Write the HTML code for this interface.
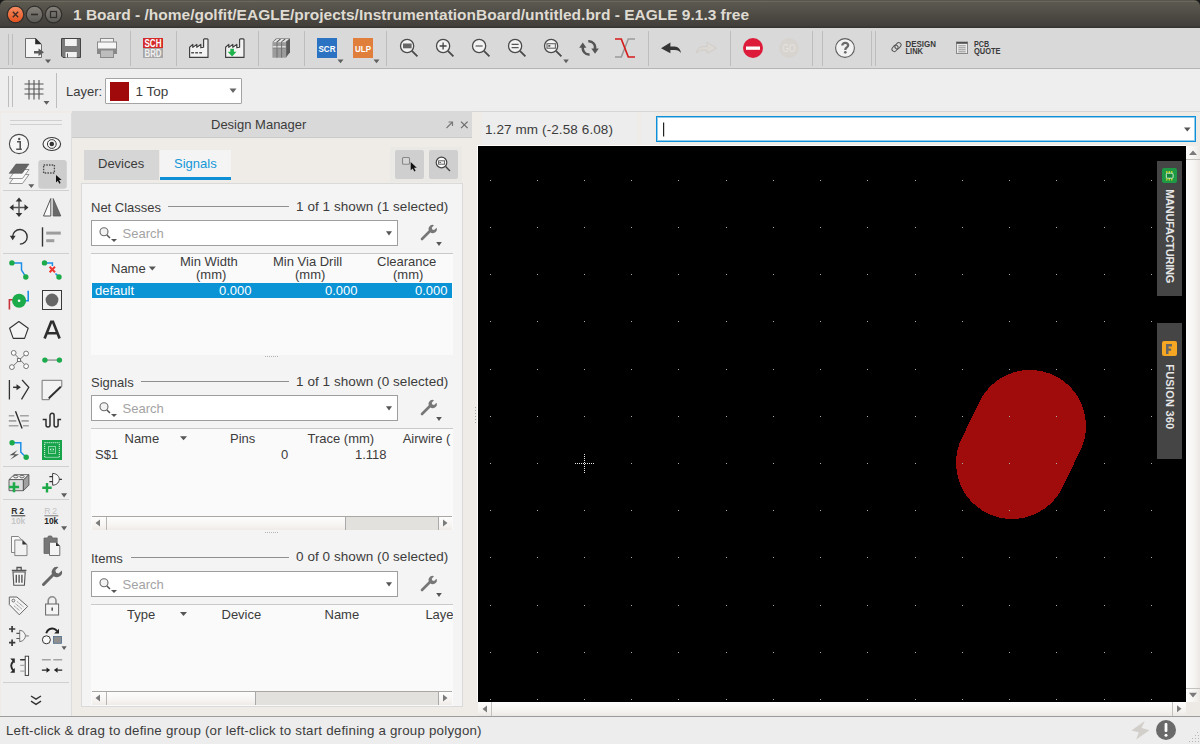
<!DOCTYPE html>
<html><head><meta charset="utf-8">
<style>
*{margin:0;padding:0;box-sizing:border-box}
html,body{width:1200px;height:744px;overflow:hidden;background:#efebe7;font-family:"Liberation Sans",sans-serif;color:#3c3c3c}
.a{position:absolute}
.t{position:absolute;white-space:nowrap;line-height:1;font-size:13px}
svg{position:absolute;overflow:visible}
.sb{width:307px;height:26px;background:#fff;border:1px solid #9e9e9e}
.ph{color:#a3a3a3}
.hs{height:14px;background:linear-gradient(#fdfdfd,#f7f5f3 60%,#efebe7);border-top:1px solid #aaa7a3}
.hh{height:13px;background:#e3e1dd;border-left:1px solid #a9a9a9;border-right:1px solid #a9a9a9}
</style></head><body>

<!-- TITLE BAR -->
<div class="a" style="left:0;top:0;width:1200px;height:8px;background:#1a1a1a"></div>
<div class="a" style="left:0;top:0;width:1200px;height:28px;background:linear-gradient(#57554e 0,#5c5950 2px,#4f4c46 14px,#423f3a 26px,#363531 27px);border-radius:6px 6px 0 0"></div>
<div class="a" style="left:3px;top:1px;width:1194px;height:1px;background:#6b685c"></div>
<div id="title" class="t" style="left:73px;top:7px;font-size:15.5px;font-weight:bold;color:#dfdbd2">1 Board - /home/golfit/EAGLE/projects/InstrumentationBoard/untitled.brd - EAGLE 9.1.3 free</div>

<!-- TOOLBAR 1 -->
<div class="a" style="left:0;top:28px;width:1200px;height:40px;background:#d9d9d9"></div>
<div class="a" style="left:0;top:68px;width:1200px;height:1px;background:#b4b4b4"></div>
<!-- TOOLBAR 2 -->
<div class="a" style="left:0;top:69px;width:1200px;height:42px;background:#eeeeee"></div>


<!-- TOOLBAR ICONS OVERLAY -->
<svg class="a" style="left:0;top:0" width="1200" height="112" viewBox="0 0 1200 112">
<defs>
<linearGradient id="gclose" x1="0" y1="0" x2="0" y2="1"><stop offset="0" stop-color="#f78e64"/><stop offset="1" stop-color="#e3501c"/></linearGradient>
<linearGradient id="gmin" x1="0" y1="0" x2="0" y2="1"><stop offset="0" stop-color="#85827c"/><stop offset="1" stop-color="#5c5a55"/></linearGradient>
</defs>
<!-- window buttons -->
<circle cx="15.5" cy="14.5" r="8.3" fill="url(#gclose)" stroke="#2f2e2b" stroke-width="1.2"/>
<path d="M12.8 11.8l5.4 5.4M18.2 11.8l-5.4 5.4" stroke="#3a2a22" stroke-width="1.3"/>
<circle cx="34.5" cy="14.5" r="8.3" fill="url(#gmin)" stroke="#2f2e2b" stroke-width="1.2"/>
<path d="M31 14.5h7" stroke="#2f2e2b" stroke-width="1.6"/>
<circle cx="53.5" cy="14.5" r="8.3" fill="url(#gmin)" stroke="#2f2e2b" stroke-width="1.2"/>
<rect x="50.5" y="11.5" width="6" height="6" fill="none" stroke="#2f2e2b" stroke-width="1.2"/>

<!-- toolbar handles & separators -->
<g fill="#bdbdbd" shape-rendering="crispEdges">
<rect x="8" y="34" width="1" height="31"/><rect x="12" y="34" width="1" height="31"/>
<rect x="130" y="31" width="1" height="35"/><rect x="176" y="31" width="1" height="35"/>
<rect x="258" y="31" width="1" height="35"/><rect x="304" y="31" width="1" height="35"/>
<rect x="386" y="31" width="1" height="35"/><rect x="648" y="31" width="1" height="35"/>
<rect x="730" y="31" width="1" height="35"/><rect x="812" y="31" width="1" height="35"/>
<rect x="822" y="31" width="1" height="35"/><rect x="871" y="31" width="1" height="35"/>
<rect x="875" y="31" width="1" height="35"/>
<rect x="8" y="76" width="1" height="31"/><rect x="12" y="76" width="1" height="31"/>
<rect x="56" y="73" width="1" height="35"/>
</g>

<!-- new/file -->
<path d="M25.5 38.5h10l6 6v13h-16z" fill="#f4f4f4" stroke="#6e6e6e"/>
<path d="M35.2 38.2h0.6l5.7 5.7v0.4h-6.3z" fill="#2a2a2a"/>
<path d="M34 51h4.5v-2.5l5.5 3.8-5.5 3.8v-2.6h-4.5z" fill="#5b5b5b"/>
<path d="M45 59.5h6l-3 3.8z" fill="#5f5f5f"/>
<!-- save -->
<path d="M61.5 38.5h19v19h-17.5l-1.5-1.5z" fill="#7b7b7b" stroke="#444"/>
<rect x="65" y="39" width="11.8" height="7" fill="#f2f2f2"/>
<rect x="65.5" y="52" width="11.3" height="5.5" fill="#f2f2f2"/>
<rect x="67" y="53.5" width="1" height="4" fill="#555"/>
<!-- print -->
<rect x="100.5" y="38.5" width="13" height="7.5" fill="#f2f2f2" stroke="#8a8a8a"/>
<rect x="97.5" y="42" width="19" height="11.5" fill="#f6f6f6" stroke="#8a8a8a"/>
<rect x="97.5" y="48.5" width="19" height="5" fill="#888"/>
<rect x="100.5" y="50" width="13" height="7.5" fill="#bdbdbd" stroke="#8a8a8a"/>

<!-- SCH/BRD -->
<rect x="143" y="38" width="20" height="10" fill="#d42a2a"/>
<rect x="143" y="48" width="20" height="10" fill="#a7a7a7"/>
<text x="153" y="47" text-anchor="middle" font-family="Liberation Sans" font-weight="bold" font-size="10.6" fill="#fff" textLength="17" lengthAdjust="spacingAndGlyphs">SCH</text>
<text x="153" y="56.9" text-anchor="middle" font-family="Liberation Sans" font-weight="bold" font-size="10.6" fill="#f2f2f2" textLength="17" lengthAdjust="spacingAndGlyphs">BRD</text>

<!-- factory 1 -->
<path d="M189.6 57.4v-10.2l3.2-2.8v3l4-3v2.9l4-2.9v3.4l2.8-0.6v-7.7l0.6-0.6h3.2l0.6 0.6v17.9z" fill="#f3f3f3" stroke="#3e3e3e" stroke-width="1.15" stroke-linejoin="round"/>
<path d="M191.2 52.7h2.8M195.2 52.7h2.8M199.2 52.7h2.8" stroke="#555" stroke-width="1.4"/>
<!-- factory 2 -->
<path d="M225.6 57.4v-10.2l3.2-2.8v3l4-3v2.9l4-2.9v3.4l2.8-0.6v-7.7l0.6-0.6h3.2l0.6 0.6v17.9z" fill="#f3f3f3" stroke="#3e3e3e" stroke-width="1.15" stroke-linejoin="round"/>
<path d="M230.3 48.8h3.6v3h2.6l-4.4 4.8-4.4-4.8h2.6z" fill="#1fb34b"/>
<!-- library -->
<path d="M286 41.5l4-3v13.8l-4 5.2z" fill="#5a5a5a"/>
<path d="M272.4 42.2l3.6-3.6h14l-4 3z" fill="#5a5a5a"/>
<path d="M273.2 42l3.4-3h3l-3.4 3z M277.8 42l3.4-3h3l-3.4 3z M282.4 42l3.4-3h3l-3.4 3z" fill="#e4e4e4"/>
<rect x="272.4" y="42.2" width="13.8" height="15.5" fill="#9c9c9c"/>
<path d="M277 42.2v15.5M281.6 42.2v15.5" stroke="#6a6a6a" stroke-width="0.9"/>
<path d="M272.8 46.8h3.6M277.5 46.8h3.6M282.1 46.8h3.6" stroke="#f2f2f2" stroke-width="1.3"/>
<path d="M272.8 48.2h3.6M277.5 48.2h3.6M282.1 48.2h3.6" stroke="#7a7a7a" stroke-width="0.7"/>
<!-- SCR / ULP -->
<rect x="317" y="38" width="20" height="20" fill="#2b72c2"/>
<text x="327" y="52" text-anchor="middle" font-family="Liberation Sans" font-weight="bold" font-size="9.5" fill="#fff" textLength="17" lengthAdjust="spacingAndGlyphs">SCR</text>
<path d="M337.5 59.5h6l-3 3.8z" fill="#5f5f5f"/>
<rect x="353" y="38" width="20" height="20" fill="#e07f3b"/>
<text x="363" y="52" text-anchor="middle" font-family="Liberation Sans" font-weight="bold" font-size="9.5" fill="#fff" textLength="16" lengthAdjust="spacingAndGlyphs">ULP</text>
<path d="M373.5 59.5h6l-3 3.8z" fill="#5f5f5f"/>

<!-- zoom icons -->
<g stroke="#4a4a4a" stroke-width="1.3" fill="#f3f3f3">
<circle cx="407.1" cy="46" r="6.6"/><circle cx="443.1" cy="46" r="6.6"/><circle cx="479.1" cy="46" r="6.6"/><circle cx="515.1" cy="46" r="6.6"/><circle cx="551.1" cy="46" r="6.6"/>
</g>
<g stroke="#4a4a4a" stroke-width="1.8">
<path d="M411.9 50.9l5.5 5.5M447.9 50.9l5.5 5.5M483.9 50.9l5.5 5.5M519.9 50.9l5.5 5.5M555.9 50.9l5.5 5.5"/>
</g>
<rect x="403" y="43.5" width="8.6" height="4.8" fill="#666"/>
<path d="M439.6 46h7M443.1 42.5v7" stroke="#444" stroke-width="1.3"/>
<path d="M475.6 46h7" stroke="#777" stroke-width="1.5"/>
<path d="M511.6 44.3h7M511.6 47.7h7" stroke="#555" stroke-width="1.3"/>
<rect x="547" y="43.7" width="8.4" height="4.5" fill="none" stroke="#666" stroke-width="1.1"/>
<rect x="548.3" y="45" width="2" height="1.8" fill="#555"/>
<path d="M563.3 59.5h5.5l-2.75 3.8z" fill="#5f5f5f"/>

<!-- redraw -->
<path d="M589.6 54.5a6.3 6.3 0 0 1 -6.6 -8" fill="none" stroke="#555" stroke-width="2.4"/>
<path d="M579.2 47.8h7.2l-3.6-5.2z" fill="#555"/>
<path d="M588.3 41.3a6.3 6.3 0 0 1 6.6 8" fill="none" stroke="#555" stroke-width="2.4"/>
<path d="M591.3 48.6h7.5l-3.75 5.1z" fill="#555"/>

<!-- ratsnest -->
<path d="M635 39h-6.7l-7 18h-6.3" fill="none" stroke="#9a9a9a" stroke-width="1.6"/>
<path d="M615 39h6.3l7 18h6.7" fill="none" stroke="#d61b1b" stroke-width="1.7"/>

<!-- undo / redo -->
<path d="M661 48.2l9.4-5.8v4.2h4c4 0 6.3 3 6.5 6.4c-1.4-1.9-3.2-2.9-6-2.9h-4.5v3.2z" fill="#363636"/>
<path d="M716.5 48.2l-9.4-5.8v4.2h-4c-4 0-6.3 3-6.5 6.4c1.4-1.9 3.2-2.9 6-2.9h4.5v3.2z" fill="#dcd9d5" stroke="#c8c5c0" stroke-width="0.6"/>

<!-- stop / go -->
<circle cx="753" cy="48" r="10" fill="#dd1c3b"/>
<rect x="746" y="46.5" width="14" height="3.3" fill="#fff"/>
<circle cx="789" cy="48" r="10" fill="#d7d4d0"/>
<text x="789" y="52.2" text-anchor="middle" font-family="Liberation Sans" font-size="11" fill="#e6e3df" textLength="13" lengthAdjust="spacingAndGlyphs">GO</text>

<!-- help -->
<circle cx="845" cy="48" r="9.4" fill="#f2f2f2" stroke="#5e5e5e" stroke-width="1.1"/>
<path d="M842.3 45.5C842.1 42.4 848.2 41.9 848.2 45.3C848.2 47.4 845.3 47.6 845.3 49.9" fill="none" stroke="#6a6a6a" stroke-width="2.3"/>
<circle cx="845.3" cy="52.3" r="1.35" fill="#6a6a6a"/>

<!-- design link -->
<g fill="none" stroke="#555" stroke-width="0.95">
<rect x="891.5" y="46" width="7" height="4.6" rx="2.3" transform="rotate(-50 895 48.3)"/>
<rect x="894.5" y="43.5" width="7" height="4.6" rx="2.3" transform="rotate(-50 898 45.8)"/>
</g>
<text x="905.5" y="47.2" font-family="Liberation Sans" font-weight="bold" font-size="8.3" fill="#3a3a3a" textLength="30.5" lengthAdjust="spacingAndGlyphs">DESIGN</text>
<text x="905.5" y="54.4" font-family="Liberation Sans" font-weight="bold" font-size="8.3" fill="#3a3a3a" textLength="17.5" lengthAdjust="spacingAndGlyphs">LINK</text>
<!-- pcb quote -->
<rect x="956.5" y="42" width="11" height="11.5" fill="#ececec" stroke="#8a8a8a"/>
<rect x="956.5" y="42" width="11" height="1.8" fill="#505050"/>
<path d="M958.3 45.8h7.4M958.3 47.8h7.4M958.3 49.8h7.4M958.3 51.8h7.4" stroke="#8a8a8a" stroke-width="0.9"/>
<text x="974" y="47.2" font-family="Liberation Sans" font-weight="bold" font-size="8.3" fill="#3a3a3a" textLength="15.2" lengthAdjust="spacingAndGlyphs">PCB</text>
<text x="974" y="54.4" font-family="Liberation Sans" font-weight="bold" font-size="8.3" fill="#3a3a3a" textLength="26.6" lengthAdjust="spacingAndGlyphs">QUOTE</text>

<!-- toolbar 2: grid -->
<path d="M24.5 84h19M24.5 89h19M24.5 94h19M29 80v19.5M34 80v19.5M39 80v19.5" stroke="#555" stroke-width="1.1"/>
<path d="M43.5 101h6l-3 3.8z" fill="#5f5f5f"/>
</svg>


<div class="t" style="left:66px;top:84.7px">Layer:</div>
<div class="a" style="left:105px;top:78px;width:137px;height:26px;background:#fff;border:1px solid #a4a4a4;border-radius:1px"></div>
<div class="a" style="left:110px;top:82px;width:19px;height:19px;background:#a10a0a"></div>
<div class="t" style="left:135.5px;top:85.2px;font-size:13.5px">1 Top</div>
<svg class="a" style="left:0;top:0" width="1" height="1"><path fill="#666" d="M229.5 88.5h7l-3.5 4.5z"/></svg>

<!-- LEFT TOOLBAR -->
<div class="a" style="left:1px;top:113px;width:71px;height:603px;background:#efefef;border-right:1px solid #dcdcdc"></div>


<!-- LEFT TOOLBAR ICONS -->
<svg class="a" style="left:0;top:110px" width="72" height="606" viewBox="0 110 72 606">
<g fill="#d0d0d0" shape-rendering="crispEdges">
<rect x="10" y="120" width="52" height="1"/><rect x="10" y="124" width="52" height="1"/>
<rect x="3" y="190" width="66" height="1"/><rect x="3" y="253" width="66" height="1"/>
<rect x="3" y="466" width="66" height="1"/><rect x="3" y="499" width="66" height="1"/>
<rect x="3" y="682" width="66" height="1"/>
</g>
<!-- info -->
<circle cx="19" cy="144" r="9.6" fill="#f6f6f6" stroke="#4a4a4a" stroke-width="1.1"/>
<circle cx="19.2" cy="139" r="1.2" fill="#555"/>
<path d="M17 141.8h3.2v7M16.2 149.2h5.6" fill="none" stroke="#555" stroke-width="1.6"/>
<!-- eye -->
<ellipse cx="51.8" cy="144" rx="8.8" ry="6.5" fill="#f6f6f6" stroke="#3a3a3a" stroke-width="1.1"/>
<circle cx="51.8" cy="144" r="4.4" fill="none" stroke="#3a3a3a" stroke-width="1"/>
<circle cx="51.8" cy="144" r="2.3" fill="#333"/>
<!-- layers -->
<path d="M9.5 183.5l6.5-9h13l-6.5 9z" fill="#f8f8f8" stroke="#8a8a8a" stroke-width="0.9"/>
<path d="M9.5 178.5l6.5-9h13l-6.5 9z" fill="#f8f8f8" stroke="#8a8a8a" stroke-width="0.9"/>
<path d="M9.2 173.3l6.8-9.2h13l-6.8 9.2z" fill="#666" stroke="#555" stroke-width="0.6"/>
<path d="M28.3 184.2h6l-3 3.8z" fill="#5f5f5f"/>
<!-- group (selected) -->
<rect x="38.3" y="160" width="28.5" height="28.7" rx="3" fill="#cdcdcd"/>
<rect x="43.6" y="165" width="10.8" height="8" fill="none" stroke="#4a4a4a" stroke-width="1.3" stroke-dasharray="1.5 1.2"/>
<path d="M56 175v7.5l1.8-1.8 1.6 3 1.2-0.6-1.5-3h2.6z" fill="#111"/>

<!-- move -->
<path d="M19 199.5v16M11 207.5h16" stroke="#555" stroke-width="1.4"/>
<path d="M19 197.5l-3.3 4h6.6z M19 217l-3.3-4h6.6z M9.5 207.5l4-3.3v6.6z M28.5 207.5l-4-3.3v6.6z" fill="#333"/>
<!-- mirror -->
<path d="M43.5 216l7.3-17.5v17.5z" fill="#fafafa" stroke="#555" stroke-width="1"/>
<path d="M53.2 198.5v17.5h7.6z" fill="#6a6a6a" stroke="#555" stroke-width="0.8"/>
<!-- rotate -->
<path d="M12.6 236.5a7.3 7.3 0 1 1 7.3 7.6" fill="none" stroke="#333" stroke-width="1.4"/>
<path d="M9.8 235.8h5.8l-2.9 4.5z" fill="#333"/>
<!-- align -->
<path d="M42.5 227.3v19.3" stroke="#333" stroke-width="1.4"/>
<rect x="46.2" y="231.6" width="14.6" height="3" fill="#9d9d9d"/>
<rect x="46.2" y="239.2" width="8.1" height="3" fill="#9d9d9d"/>

<!-- route -->
<path d="M11.9 262.9h9.6v7.2l4.3 6.8" fill="none" stroke="#1e8fe6" stroke-width="1.5"/>
<circle cx="11.9" cy="262.9" r="2.7" fill="#1cab4b"/><circle cx="25.8" cy="277" r="2.7" fill="#1cab4b"/>
<!-- ripup -->
<path d="M44.5 262.9h7.9v3M55.5 273.5l3.5 3.5" fill="none" stroke="#1e8fe6" stroke-width="1.5"/>
<path d="M49.6 266.8l5.4 5.4M55 266.8l-5.4 5.4" stroke="#f0342f" stroke-width="2"/>
<circle cx="44.5" cy="262.9" r="2.7" fill="#1cab4b"/><circle cx="59" cy="277" r="2.7" fill="#1cab4b"/>
<!-- via -->
<path d="M9.4 309.4v-9.7h3.5" fill="none" stroke="#c8323a" stroke-width="1.6"/>
<path d="M25.5 300.7h2.7v-10" fill="none" stroke="#1e8fe6" stroke-width="1.6"/>
<circle cx="19.1" cy="300.7" r="7" fill="#1cab4b"/>
<circle cx="19.1" cy="300.7" r="1.3" fill="#fff"/>
<!-- hole -->
<rect x="42.5" y="290.5" width="19" height="19" fill="#f2f2f2" stroke="#3a3a3a" stroke-width="1"/>
<circle cx="52" cy="300" r="6.4" fill="#666"/>
<!-- polygon -->
<path d="M18.9 321.5l9.3 6.8-3.6 10.1h-11.4l-3.6-10.1z" fill="#f4f4f4" stroke="#333" stroke-width="1.1" stroke-linejoin="round"/>
<!-- text A -->
<path d="M44.6 338.6l6.6-16.8h1.8l6.6 16.8M47.4 333.2h9.4" fill="none" stroke="#2e2e2e" stroke-width="2.6"/>

<!-- net -->
<path d="M13.7 352.9l12.4 13.3M26.1 353.5l-14.2 13.6" stroke="#777" stroke-width="1"/>
<rect x="17.4" y="358.6" width="3" height="3" fill="#fff" stroke="#666" stroke-width="0.9"/>
<g fill="#fff" stroke="#666" stroke-width="0.9">
<circle cx="13.7" cy="352.9" r="2.4"/><circle cx="26.1" cy="353.5" r="2.4"/><circle cx="11.9" cy="367.1" r="2.4"/><circle cx="26.1" cy="366.2" r="2.4"/>
</g>
<!-- airwire -->
<path d="M45 360.1h14.4" stroke="#a0a0a0" stroke-width="1.6"/>
<circle cx="44.9" cy="360.1" r="2.7" fill="#1cab4b"/><circle cx="59.4" cy="360.1" r="2.7" fill="#1cab4b"/>
<!-- pinswap -->
<path d="M9.4 380v19.4M22.1 380l6.7 7.3-7.3 12.1" fill="none" stroke="#333" stroke-width="1.3"/>
<path d="M13.1 387.3h4" stroke="#333" stroke-width="1.5"/>
<path d="M16.5 384.3l4.4 3-4.4 3z" fill="#333"/>
<!-- miter -->
<path d="M42.1 380.3h19.7v6.4h-1l-11.5 11.5v1.5h-7.2z" fill="#f3f3f3" stroke="#777" stroke-width="1"/>
<path d="M60.8 386.7l-12 11.6" stroke="#2e2e2e" stroke-width="1.9"/>
<!-- meander lines -->
<path d="M8.8 415.7h5.5M20 415.7h8.8M8.8 420.9h7.5M21.5 420.9h7.3M8.8 425.8h9.6M23 425.8h5.8" stroke="#a3a3a3" stroke-width="1.6"/>
<path d="M15.5 411.3l6.6 17.1" stroke="#2e2e2e" stroke-width="1.4"/>
<!-- meander -->
<path d="M42.7 419.4h3.3v5.6a2 2 0 0 0 4 0v-9.6a2.05 2.05 0 0 1 4.1 0v9.6a2 2 0 0 0 4 0v-5.6h3" fill="none" stroke="#2e2e2e" stroke-width="1.5"/>

<!-- autorouter -->
<path d="M12.1 442.8h8.7v9.4l5.4 5.1" fill="none" stroke="#1e8fe6" stroke-width="1.5"/>
<circle cx="12.1" cy="442.8" r="2.7" fill="#1cab4b"/><circle cx="26.2" cy="457.3" r="2.7" fill="#1cab4b"/>
<path d="M17.6 450l-8 5.3h5l-4.4 4.4 8.8-5.4h-5z" fill="#555"/>
<!-- drc -->
<rect x="42" y="440" width="20" height="20" fill="#16a34a"/>
<rect x="44.7" y="442.7" width="14.6" height="14.6" fill="none" stroke="#fff" stroke-width="1" stroke-dasharray="1 1"/>
<rect x="48.5" y="446.5" width="7" height="7" fill="none" stroke="#fff" stroke-width="1" stroke-dasharray="1 1"/>
<path d="M50.5 449h3M50.5 451h3M50.5 449v2M53.5 449v2" stroke="#e8fbe8" stroke-width="0.8" stroke-dasharray="1 1"/>

<!-- add part -->
<path d="M9 479.6l5.1-4.9h14.8l-5.5 5.3z" fill="#f6f6f6" stroke="#555" stroke-width="0.9" stroke-linejoin="round"/>
<path d="M9 479.6h14.4v11.1h-14.4z" fill="#dcdcdc" stroke="#555" stroke-width="0.9"/>
<path d="M23.4 480l5.5-5.3v10.5l-5.5 5.5z" fill="#a0a0a0" stroke="#555" stroke-width="0.9" stroke-linejoin="round"/>
<ellipse cx="15.8" cy="476.6" rx="2.2" ry="1.3" fill="#eee" stroke="#555" stroke-width="0.9"/>
<ellipse cx="22" cy="476.6" rx="2.2" ry="1.3" fill="#eee" stroke="#555" stroke-width="0.9"/>
<path d="M9 487h10.1M14 482.2v10.1" stroke="#1faa4a" stroke-width="2.6"/>
<!-- add gate -->
<path d="M52.6 473.4C57.5 473.6 59.3 477 59.3 479.3C59.3 481.6 57.5 485 52.6 485.2z" fill="#f8f8f8" stroke="#444" stroke-width="1"/>
<path d="M49.4 476.6h3.2M49.4 481.7h3.2M59.3 479.3h2.6" stroke="#333" stroke-width="1.2"/>
<path d="M42.3 487.8h9.4M47 483.1v9.4" stroke="#1faa4a" stroke-width="2.4"/>
<path d="M61.1 493.2h6l-3 4.4z" fill="#5f5f5f"/>

<!-- value R2/10k -->
<text x="11.3" y="513.8" font-family="Liberation Sans" font-weight="bold" font-size="8.6" fill="#333" textLength="12.8" lengthAdjust="spacing">R2</text>
<rect x="11.3" y="515.3" width="14" height="1" fill="#333"/>
<text x="11.3" y="523.9" font-family="Liberation Sans" font-weight="bold" font-size="9" fill="#c6c6c6" textLength="14" lengthAdjust="spacingAndGlyphs">10k</text>
<text x="44.3" y="513.8" font-family="Liberation Sans" font-size="8.6" fill="#c3c3c3" textLength="12.8" lengthAdjust="spacing">R2</text>
<rect x="44.3" y="515.3" width="14" height="1" fill="#777"/>
<text x="44.3" y="523.9" font-family="Liberation Sans" font-weight="bold" font-size="9" fill="#222" textLength="14" lengthAdjust="spacingAndGlyphs">10k</text>
<path d="M61.1 526.2h6l-3 4.4z" fill="#5f5f5f"/>

<!-- copy -->
<path d="M11.5 536.5h6.8l3.7 3.7v12.3h-10.5z" fill="#fafafa" stroke="#777" stroke-width="0.9"/>
<path d="M14.8 540h7.6l4.6 4.6v11h-12.2z" fill="#f2f2f2" stroke="#777" stroke-width="0.9"/>
<path d="M22.4 540l4.6 4.6h-4.6z" fill="#333"/>
<!-- paste -->
<path d="M44 538h3.5l1-2h3l1 2h4.7v15.5h-13.2z" fill="#777" stroke="#666" stroke-width="0.8"/>
<path d="M49.5 542.2h6.5l3.8 3.8v9.5h-10.3z" fill="#f4f4f4" stroke="#666" stroke-width="0.9"/>
<path d="M56 542.2l3.8 3.8h-3.8z" fill="#333"/>
<!-- delete -->
<path d="M11.8 570.5h14.6M17 570v-2.5h4.2v2.5" fill="none" stroke="#555" stroke-width="1.3"/>
<path d="M13 572h12.2l-0.8 13.3h-10.6z" fill="#f4f4f4" stroke="#555" stroke-width="1.1"/>
<path d="M16.3 574.8v8M19.1 574.8v8M21.9 574.8v8" stroke="#555" stroke-width="1.4"/>
<!-- wrench -->
<path d="M43.5 584.5l10.2-10.2" stroke="#666" stroke-width="3" stroke-linecap="round"/>
<path d="M53 575.5a5.2 5.2 0 0 1 5.5-8.4l-3.2 3.2 0.8 2.5 2.5 0.8 3.2-3.2a5.2 5.2 0 0 1-8.4 5.5z" fill="#666"/>
<!-- tag -->
<path d="M9.3 597h7.6l10.8 9.4-8.4 8.4-10-10.2z" fill="#f4f4f4" stroke="#666" stroke-width="1" stroke-linejoin="round"/>
<circle cx="13.4" cy="600.6" r="1.4" fill="none" stroke="#666" stroke-width="0.9"/>
<path d="M17.2 601.6l6.2 5.2M15.6 603.8l6.2 5.2M14.2 606l5.6 4.8" stroke="#777" stroke-width="0.9" stroke-dasharray="1.2 0.6"/>
<!-- lock -->
<path d="M48.2 604v-3.3a3.9 3.9 0 0 1 7.8 0v3.3" fill="none" stroke="#8a8a8a" stroke-width="1.6"/>
<rect x="45.6" y="604" width="13" height="11" fill="#f4f4f4" stroke="#666" stroke-width="1"/>
<rect x="51.4" y="607.5" width="1.6" height="3.2" fill="#555"/>

<!-- gate add -->
<path d="M9 629h6.3M12.1 625.9v6.3M9 642.7h6.3M12.1 639.6v6.3" stroke="#3a3a3a" stroke-width="1.7"/>
<path d="M19.7 630.2C23.5 630.6 25.3 633.6 25.5 635.9C25.3 638.2 23.5 641.3 19.7 641.7z" fill="#f4f4f4" stroke="#777" stroke-width="1"/>
<path d="M16.4 633.4h3.3M16.4 638.5h3.3" stroke="#555" stroke-width="1.1"/>
<path d="M25.5 635.9h3.3" stroke="#999" stroke-width="1.4"/>
<!-- replace -->
<path d="M46.2 633.2C47.5 629.5 51 627.6 54.2 628.8C55.5 629.3 56.3 630 57 631" fill="none" stroke="#222" stroke-width="1.9"/>
<path d="M59 628.7v4.8h-4.8z" fill="#222"/>
<circle cx="46.4" cy="639.8" r="4" fill="#fafafa" stroke="#333" stroke-width="1"/>
<rect x="53.5" y="636.5" width="8" height="6.8" fill="#8f8f8f" stroke="#4a6a8a" stroke-width="0.8"/>
<path d="M61.5 646.3h5.2l-2.6 3.8z" fill="#5f5f5f"/>
<!-- swap -->
<path d="M13.6 661 Q8.8 665.8 13.6 670.6" fill="none" stroke="#2a2a2a" stroke-width="1.9"/>
<path d="M10.2 658.4h4.6v4.8z M10.2 672.7h4.6v-4.8z" fill="#2a2a2a"/>
<rect x="25.2" y="656.2" width="3.4" height="19.2" fill="#fcfcfc" stroke="#333" stroke-width="0.9"/>
<path d="M20.2 659.7h5M20.2 665.4h5M20.2 671.1h5" stroke="#aaa" stroke-width="1.4"/>
<path d="M20.2 659.7h5" stroke="#333" stroke-width="1.4"/>
<!-- swap2 -->
<path d="M41.9 659.7h8.9M53.3 659.7h8.9" stroke="#a3a3a3" stroke-width="1.6"/>
<path d="M41.9 670.1h5M62.2 670.1h-5" stroke="#222" stroke-width="1.4"/>
<path d="M46.5 667.4l3.7 2.7-3.7 2.7z M57.6 667.4l-3.7 2.7 3.7 2.7z" fill="#222"/>
<!-- chevron -->
<path d="M31 696l5 3.2 5-3.2M31 701.2l5 3.2 5-3.2" fill="none" stroke="#333" stroke-width="1.4"/>
</svg>

<!-- DESIGN MANAGER -->
<div class="a" style="left:72px;top:111px;width:400px;height:27px;background:#d9d9d9;border-bottom:1px solid #cbcbcb"></div>
<div id="dmtitle" class="t" style="left:211px;top:118px;color:#3c3c3c">Design Manager</div>


<!-- DM BODY -->
<div class="a" style="left:84px;top:150px;width:75px;height:30px;background:#d6d6d6"></div>
<div class="t" style="left:98px;top:157px">Devices</div>
<div class="a" style="left:160px;top:150px;width:71px;height:30px;background:#f4f4f4"></div>
<div class="a" style="left:160px;top:177px;width:71px;height:3px;background:#0f8fd6"></div>
<div class="t" style="left:174px;top:157px;color:#1597d8">Signals</div>
<div class="a" style="left:390px;top:147px;width:72px;height:35px;background:#ebe9e6"></div>
<div class="a" style="left:395px;top:150px;width:29px;height:29px;background:#cfcfcf;border-radius:2px"></div>
<div class="a" style="left:429px;top:150px;width:29px;height:29px;background:#cfcfcf;border-radius:2px"></div>
<div class="a" style="left:81px;top:183px;width:382px;height:524px;background:#f4f4f4;border:1px solid #dadada"></div>

<!-- NET CLASSES -->
<div class="t" style="left:91px;top:201px">Net Classes</div>
<div class="a" style="left:168px;top:206px;width:121px;height:1px;background:#8f8f8f"></div>
<div class="t" style="left:296px;top:199.6px;font-size:13.5px;letter-spacing:0.06px">1 of 1 shown (1 selected)</div>
<div class="a sb" style="left:91px;top:220px"></div>
<div class="t ph" style="left:122.5px;top:227px">Search</div>
<div class="a" style="left:91px;top:253px;width:362px;height:102px;background:#fafafa;border-top:1px solid #c9c9c9"></div>
<div class="t" style="left:111px;top:262px">Name</div>
<div class="t" style="left:180px;top:255px">Min Width</div>
<div class="t" style="left:196px;top:268px">(mm)</div>
<div class="t" style="left:273px;top:255px">Min Via Drill</div>
<div class="t" style="left:295px;top:268px">(mm)</div>
<div class="t" style="left:377px;top:255px">Clearance</div>
<div class="t" style="left:393px;top:268px">(mm)</div>
<div class="a" style="left:92px;top:283px;width:360px;height:15px;background:#0a93d5"></div>
<div class="t" style="left:95px;top:283.8px;color:#fff">default</div>
<div class="t" style="left:219px;top:283.8px;color:#fff">0.000</div>
<div class="t" style="left:325px;top:283.8px;color:#fff">0.000</div>
<div class="t" style="left:415px;top:283.8px;color:#fff">0.000</div>

<!-- SIGNALS -->
<div class="t" style="left:91px;top:376px">Signals</div>
<div class="a" style="left:141px;top:381px;width:148px;height:1px;background:#8f8f8f"></div>
<div class="t" style="left:296px;top:375.2px;font-size:13.5px;letter-spacing:0.06px">1 of 1 shown (0 selected)</div>
<div class="a sb" style="left:91px;top:395px"></div>
<div class="t ph" style="left:122.5px;top:402px">Search</div>
<div class="a" style="left:91px;top:428px;width:362px;height:102px;background:#fafafa;border-top:1px solid #c9c9c9"></div>
<div class="t" style="left:124.5px;top:432px">Name</div>
<div class="t" style="left:230px;top:432px">Pins</div>
<div class="t" style="left:307.5px;top:432px">Trace (mm)</div>
<div class="a" style="left:402px;top:428px;width:51px;height:20px;overflow:hidden"><div class="t" style="left:0.7px;top:4px">Airwire (</div></div>
<div class="t" style="left:95px;top:448px">S$1</div>
<div class="t" style="left:281px;top:448px">0</div>
<div class="t" style="left:355px;top:448px">1.118</div>

<!-- ITEMS -->
<div class="t" style="left:91px;top:551.5px">Items</div>
<div class="a" style="left:131px;top:557px;width:158px;height:1px;background:#8f8f8f"></div>
<div class="t" style="left:296px;top:550.2px;font-size:13.5px;letter-spacing:0.06px">0 of 0 shown (0 selected)</div>
<div class="a sb" style="left:91px;top:571px"></div>
<div class="t ph" style="left:122.5px;top:578px">Search</div>
<div class="a" style="left:91px;top:604px;width:362px;height:102px;background:#fafafa;border-top:1px solid #c9c9c9"></div>
<div class="t" style="left:127px;top:608px">Type</div>
<div class="t" style="left:221.5px;top:608px">Device</div>
<div class="t" style="left:324.5px;top:608px">Name</div>
<div class="a" style="left:425px;top:604px;width:28px;height:20px;overflow:hidden"><div class="t" style="left:0.4px;top:4px">Layer</div></div>

<!-- COORD + COMMAND -->
<div class="a" style="left:482px;top:111px;width:155px;height:33px;background:#ededed"></div>
<div class="a" style="left:641px;top:111px;width:13px;height:33px;background:#ededed"></div>
<div class="a" style="left:472px;top:111px;width:728px;height:1px;background:#d6d6d6"></div>
<div id="coord" class="t" style="left:485px;top:122.6px;font-size:13.5px;letter-spacing:0.1px">1.27 mm (-2.58 6.08)</div>
<div class="a" style="left:656px;top:116px;width:540px;height:26px;background:#fff;border:1px solid #0b8fd8;box-shadow:inset 0 0 0 1px rgba(11,143,216,0.45)"></div>

<!-- CANVAS -->
<div class="a" style="left:477px;top:145px;width:709px;height:557px;background:#fdfdfd"></div>
<div class="a" style="left:478px;top:146px;width:708px;height:556px;background:#000"></div>
<svg class="a" style="left:478px;top:146px" width="708" height="556" viewBox="478 146 708 556">
<line x1="1030" y1="426" x2="1012" y2="463" stroke="#a00c0c" stroke-width="112" stroke-linecap="round" shape-rendering="crispEdges"/>
<path shape-rendering="crispEdges" fill="#aeaeae" d="M490 180h1v1h-1zM490 227h1v1h-1zM490 274h1v1h-1zM490 321h1v1h-1zM490 369h1v1h-1zM490 416h1v1h-1zM490 463h1v1h-1zM490 510h1v1h-1zM490 557h1v1h-1zM490 605h1v1h-1zM490 652h1v1h-1zM490 699h1v1h-1zM537 180h1v1h-1zM537 227h1v1h-1zM537 274h1v1h-1zM537 321h1v1h-1zM537 369h1v1h-1zM537 416h1v1h-1zM537 463h1v1h-1zM537 510h1v1h-1zM537 557h1v1h-1zM537 605h1v1h-1zM537 652h1v1h-1zM537 699h1v1h-1zM584 180h1v1h-1zM584 227h1v1h-1zM584 274h1v1h-1zM584 321h1v1h-1zM584 369h1v1h-1zM584 416h1v1h-1zM584 463h1v1h-1zM584 510h1v1h-1zM584 557h1v1h-1zM584 605h1v1h-1zM584 652h1v1h-1zM584 699h1v1h-1zM631 180h1v1h-1zM631 227h1v1h-1zM631 274h1v1h-1zM631 321h1v1h-1zM631 369h1v1h-1zM631 416h1v1h-1zM631 463h1v1h-1zM631 510h1v1h-1zM631 557h1v1h-1zM631 605h1v1h-1zM631 652h1v1h-1zM631 699h1v1h-1zM678 180h1v1h-1zM678 227h1v1h-1zM678 274h1v1h-1zM678 321h1v1h-1zM678 369h1v1h-1zM678 416h1v1h-1zM678 463h1v1h-1zM678 510h1v1h-1zM678 557h1v1h-1zM678 605h1v1h-1zM678 652h1v1h-1zM678 699h1v1h-1zM726 180h1v1h-1zM726 227h1v1h-1zM726 274h1v1h-1zM726 321h1v1h-1zM726 369h1v1h-1zM726 416h1v1h-1zM726 463h1v1h-1zM726 510h1v1h-1zM726 557h1v1h-1zM726 605h1v1h-1zM726 652h1v1h-1zM726 699h1v1h-1zM773 180h1v1h-1zM773 227h1v1h-1zM773 274h1v1h-1zM773 321h1v1h-1zM773 369h1v1h-1zM773 416h1v1h-1zM773 463h1v1h-1zM773 510h1v1h-1zM773 557h1v1h-1zM773 605h1v1h-1zM773 652h1v1h-1zM773 699h1v1h-1zM820 180h1v1h-1zM820 227h1v1h-1zM820 274h1v1h-1zM820 321h1v1h-1zM820 369h1v1h-1zM820 416h1v1h-1zM820 463h1v1h-1zM820 510h1v1h-1zM820 557h1v1h-1zM820 605h1v1h-1zM820 652h1v1h-1zM820 699h1v1h-1zM867 180h1v1h-1zM867 227h1v1h-1zM867 274h1v1h-1zM867 321h1v1h-1zM867 369h1v1h-1zM867 416h1v1h-1zM867 463h1v1h-1zM867 510h1v1h-1zM867 557h1v1h-1zM867 605h1v1h-1zM867 652h1v1h-1zM867 699h1v1h-1zM915 180h1v1h-1zM915 227h1v1h-1zM915 274h1v1h-1zM915 321h1v1h-1zM915 369h1v1h-1zM915 416h1v1h-1zM915 463h1v1h-1zM915 510h1v1h-1zM915 557h1v1h-1zM915 605h1v1h-1zM915 652h1v1h-1zM915 699h1v1h-1zM962 180h1v1h-1zM962 227h1v1h-1zM962 274h1v1h-1zM962 321h1v1h-1zM962 369h1v1h-1zM962 416h1v1h-1zM962 463h1v1h-1zM962 510h1v1h-1zM962 557h1v1h-1zM962 605h1v1h-1zM962 652h1v1h-1zM962 699h1v1h-1zM1009 180h1v1h-1zM1009 227h1v1h-1zM1009 274h1v1h-1zM1009 321h1v1h-1zM1009 369h1v1h-1zM1009 416h1v1h-1zM1009 463h1v1h-1zM1009 510h1v1h-1zM1009 557h1v1h-1zM1009 605h1v1h-1zM1009 652h1v1h-1zM1009 699h1v1h-1zM1056 180h1v1h-1zM1056 227h1v1h-1zM1056 274h1v1h-1zM1056 321h1v1h-1zM1056 369h1v1h-1zM1056 416h1v1h-1zM1056 463h1v1h-1zM1056 510h1v1h-1zM1056 557h1v1h-1zM1056 605h1v1h-1zM1056 652h1v1h-1zM1056 699h1v1h-1zM1104 180h1v1h-1zM1104 227h1v1h-1zM1104 274h1v1h-1zM1104 321h1v1h-1zM1104 369h1v1h-1zM1104 416h1v1h-1zM1104 463h1v1h-1zM1104 510h1v1h-1zM1104 557h1v1h-1zM1104 605h1v1h-1zM1104 652h1v1h-1zM1104 699h1v1h-1zM1151 180h1v1h-1zM1151 227h1v1h-1zM1151 274h1v1h-1zM1151 321h1v1h-1zM1151 369h1v1h-1zM1151 416h1v1h-1zM1151 463h1v1h-1zM1151 510h1v1h-1zM1151 557h1v1h-1zM1151 605h1v1h-1zM1151 652h1v1h-1zM1151 699h1v1h-1z"/>
<path shape-rendering="crispEdges" fill="#e8e8e8" d="M575 463h1v1h-1zM584 454h1v1h-1zM577 463h1v1h-1zM584 456h1v1h-1zM579 463h1v1h-1zM584 458h1v1h-1zM581 463h1v1h-1zM584 460h1v1h-1zM587 463h1v1h-1zM584 466h1v1h-1zM589 463h1v1h-1zM584 468h1v1h-1zM591 463h1v1h-1zM584 470h1v1h-1zM593 463h1v1h-1zM584 472h1v1h-1zM583 463h1v1h-1zM585 463h1v1h-1zM584 462h1v1h-1zM584 464h1v1h-1z"/>
<rect x="584" y="463" width="1" height="1" fill="#000" shape-rendering="crispEdges"/>
</svg>


<!-- TABLE SCROLLBARS -->
<div class="a hs" style="left:92px;top:516px;width:360px"></div>
<div class="a" style="left:106px;top:517px;width:1px;height:13px;background:#b9b6b2"></div>
<div class="a hh" style="left:345px;top:517px;width:94px"></div>
<svg class="a" style="left:0;top:0" width="1" height="1"><path fill="#7b7b7b" d="M100 519.5v7l-4.5-3.5z M443 519.5v7l4.5-3.5z"/></svg>
<div class="a" style="left:265px;top:356px;width:14px;height:1px;background:repeating-linear-gradient(90deg,#b4b4b4 0 1px,transparent 1px 2px)"></div>
<div class="a" style="left:265px;top:532px;width:14px;height:1px;background:repeating-linear-gradient(90deg,#b4b4b4 0 1px,transparent 1px 2px)"></div>

<div class="a hs" style="left:92px;top:691px;width:360px"></div>
<div class="a" style="left:106px;top:692px;width:1px;height:13px;background:#b9b6b2"></div>
<div class="a hh" style="left:255px;top:692px;width:184px"></div>
<svg class="a" style="left:0;top:0" width="1" height="1"><path fill="#7b7b7b" d="M100 694.5v7l-4.5-3.5z M443 694.5v7l4.5-3.5z"/></svg>

<!-- CANVAS SCROLLBARS -->
<div class="a" style="left:1186px;top:146px;width:14px;height:556px;background:linear-gradient(90deg,#fdfdfd,#f6f4f1 60%,#ebe8e4)"></div>
<div class="a" style="left:1186px;top:159px;width:14px;height:1px;background:#c4c2be"></div>
<div class="a" style="left:1186px;top:688px;width:14px;height:1px;background:#c4c2be"></div>
<div class="a" style="left:478px;top:702px;width:708px;height:14px;background:linear-gradient(#fdfdfd,#f6f4f1 60%,#ebe8e4)"></div>
<div class="a" style="left:491px;top:702px;width:1px;height:14px;background:#c4c2be"></div>
<div class="a" style="left:1172px;top:702px;width:1px;height:14px;background:#c4c2be"></div>
<div class="a" style="left:1186px;top:702px;width:14px;height:14px;background:#edeae6"></div>
<svg class="a" style="left:0;top:0" width="1" height="1"><path fill="#7b7b7b" d="M1189 155h8l-4-4.5z M1189 692.8h8l-4 4.6z M487 705.5v7l-4.5-3.5z M1177 705.3v7l4.5-3.5z"/></svg>

<!-- SIDE TABS -->
<div class="a" style="left:1157px;top:161px;width:25px;height:135px;background:#454545"></div>
<div class="a" style="left:1157px;top:323px;width:25px;height:136px;background:#454545"></div>
<svg class="a" style="left:0;top:0" width="1" height="1">
<text transform="translate(1165.5 189.2) rotate(90)" font-family="Liberation Sans" font-weight="bold" font-size="11" fill="#e6e6e6" textLength="94" lengthAdjust="spacing">MANUFACTURING</text>
<text transform="translate(1165.5 364.2) rotate(90)" font-family="Liberation Sans" font-weight="bold" font-size="11" fill="#e6e6e6" textLength="65" lengthAdjust="spacing">FUSION 360</text>
</svg>

<div class="a" style="left:1162px;top:168px;width:15px;height:15px;background:#1e9a46;border-radius:2px"></div>
<div class="a" style="left:1162px;top:341px;width:15px;height:15px;background:#f5a623;border-radius:2px"></div>

<!-- STATUS BAR -->
<div class="a" style="left:0;top:716px;width:1200px;height:28px;background:#ededed;border-top:1px solid #9c9c9c"></div>
<div id="status" class="t" style="left:6px;top:723.7px;font-size:13.3px;letter-spacing:0.22px;color:#3c3c3c">Left-click &amp; drag to define group (or left-click to start defining a group polygon)</div>


<!-- DM ICONS -->
<svg class="a" style="left:0;top:0" width="1" height="1">
<path d="M446.5 128l6-6M448.5 122h4v4" fill="none" stroke="#7a7a7a" stroke-width="1.2"/>
<path d="M461 121.6l6.6 6.6M467.6 121.6l-6.6 6.6" stroke="#6a6a6a" stroke-width="1.2"/>
<rect x="402.5" y="157.5" width="7" height="6.8" rx="1" fill="#d6d6d6" stroke="#888" stroke-width="1.1"/>
<path d="M410.7 162v8.2l2-1.8 1.6 3 1.3-0.7-1.6-2.9h2.8z" fill="#111"/>
<circle cx="441.5" cy="162.5" r="5.3" fill="#fafafa" stroke="#444" stroke-width="1.2"/>
<rect x="438.6" y="160.8" width="6" height="3.4" fill="#f0f0f0" stroke="#555" stroke-width="0.9"/>
<rect x="439.5" y="162" width="1.2" height="1" fill="#333"/>
<path d="M445.6 166.6l4.4 4.4" stroke="#444" stroke-width="1.4"/>
<circle cx="104" cy="231.8" r="4" fill="#f3f3f3" stroke="#6a6a6a" stroke-width="1.1"/>
<path d="M107 235l3 3" stroke="#555" stroke-width="1.5"/>
<path d="M111 239.1h6l-3 2.8z" fill="#555"/>
<path d="M386 231.3h6l-3 4.2z" fill="#555"/>
<path d="M422 239l8.5-8.5" stroke="#777" stroke-width="2.6" stroke-linecap="round"/>
<path d="M429.8 231.8a4 4 0 0 1 4.2-6.6l-2.3 2.5 0.6 1.8 1.8 0.6 2.5-2.3a4 4 0 0 1 -6.6 4.2z" fill="#777"/>
<path d="M436.2 242.1h5.6l-2.8 4z" fill="#555"/>
<circle cx="104" cy="406.8" r="4" fill="#f3f3f3" stroke="#6a6a6a" stroke-width="1.1"/>
<path d="M107 410l3 3" stroke="#555" stroke-width="1.5"/>
<path d="M111 414.1h6l-3 2.8z" fill="#555"/>
<path d="M386 406.3h6l-3 4.2z" fill="#555"/>
<path d="M422 414l8.5-8.5" stroke="#777" stroke-width="2.6" stroke-linecap="round"/>
<path d="M429.8 406.8a4 4 0 0 1 4.2-6.6l-2.3 2.5 0.6 1.8 1.8 0.6 2.5-2.3a4 4 0 0 1 -6.6 4.2z" fill="#777"/>
<path d="M436.2 417.1h5.6l-2.8 4z" fill="#555"/>
<circle cx="104" cy="582.8" r="4" fill="#f3f3f3" stroke="#6a6a6a" stroke-width="1.1"/>
<path d="M107 586l3 3" stroke="#555" stroke-width="1.5"/>
<path d="M111 590.1h6l-3 2.8z" fill="#555"/>
<path d="M386 582.3h6l-3 4.2z" fill="#555"/>
<path d="M422 590l8.5-8.5" stroke="#777" stroke-width="2.6" stroke-linecap="round"/>
<path d="M429.8 582.8a4 4 0 0 1 4.2-6.6l-2.3 2.5 0.6 1.8 1.8 0.6 2.5-2.3a4 4 0 0 1 -6.6 4.2z" fill="#777"/>
<path d="M436.2 593.1h5.6l-2.8 4z" fill="#555"/>

<path d="M148.8 266.5h7l-3.5 4z" fill="#555"/>
<path d="M180 436.2h7l-3.5 4z" fill="#555"/>
<path d="M180 612h7l-3.5 4z" fill="#555"/>
<rect x="663" y="122.5" width="1.2" height="14" fill="#222"/>
<path d="M1184 127.4h6.5l-3.25 4z" fill="#555"/>
<!-- side tab icons -->
<path d="M1166.8 171v2.2M1169.3 171v2.2M1171.8 171v2.2M1166.8 178.2v2.4M1169.3 178.2v2.4M1171.8 178.2v2.4" stroke="#f2dc10" stroke-width="1.1"/>
<rect x="1166.3" y="173.2" width="6.8" height="5" rx="1" fill="#138a3a" stroke="#e6f2d8" stroke-width="0.9"/>
<path d="M1166 344h6v2.6h-3.5v1.8h2.6v2.4h-2.6v3.2h-2.5z" fill="#666"/>
<!-- status icons -->
<path d="M1144.8 721.1L1131.4 730.4L1138.8 732.2L1136.2 739.6L1149.5 730.3L1141.5 728z" fill="#d2cfcb"/>
<circle cx="1166" cy="730" r="10" fill="#6a6a6a"/>
<rect x="1164.6" y="723" width="2.8" height="9" rx="1" fill="#fff"/>
<circle cx="1166" cy="735.2" r="1.5" fill="#fff"/>
<g fill="#b9b6b2"><rect x="1197" y="732" width="1" height="1"/><rect x="1195" y="735" width="1" height="1"/><rect x="1198" y="735" width="1" height="1"/><rect x="1192" y="738" width="1" height="1"/><rect x="1195" y="738" width="1" height="1"/><rect x="1198" y="738" width="1" height="1"/><rect x="1189" y="741" width="1" height="1"/><rect x="1192" y="741" width="1" height="1"/><rect x="1195" y="741" width="1" height="1"/><rect x="1198" y="741" width="1" height="1"/></g>
</svg>

<svg class="a" style="left:0;top:0" width="1" height="1"><g fill="#a9a9a9"><rect x="475" y="407" width="1" height="1"/><rect x="475" y="410" width="1" height="1"/><rect x="475" y="413" width="1" height="1"/><rect x="475" y="416" width="1" height="1"/><rect x="475" y="419" width="1" height="1"/><rect x="475" y="422" width="1" height="1"/></g></svg>
</body></html>
